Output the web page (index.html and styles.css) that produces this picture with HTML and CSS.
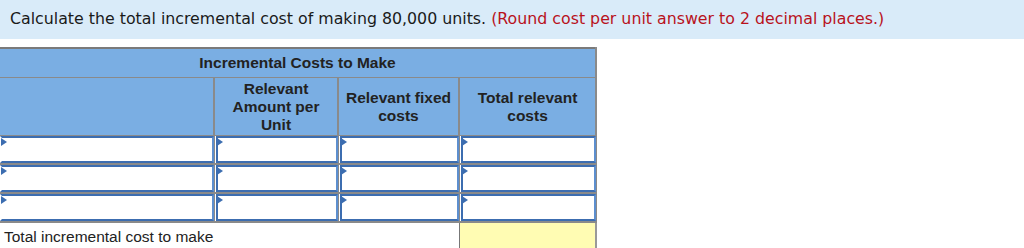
FILE: index.html
```html
<!DOCTYPE html>
<html>
<head>
<meta charset="utf-8">
<link rel="stylesheet" href="styles.css">
</head>
<body>
<div class="banner">Calculate the total incremental cost of making 80,000 units. <span class="note">(Round cost per unit answer to 2 decimal places.)</span></div>
<table class="grid">
  <colgroup>
    <col class="c1"><col class="c2"><col class="c3"><col class="c4">
  </colgroup>
  <tr class="h1"><th colspan="4">Incremental Costs to Make</th></tr>
  <tr class="h2"><th></th><th>Relevant<br>Amount per<br>Unit</th><th>Relevant fixed<br>costs</th><th>Total relevant<br>costs</th></tr>
  <tr class="row"><td><div class="inp"></div></td><td><div class="inp"></div></td><td><div class="inp"></div></td><td><div class="inp"></div></td></tr>
  <tr class="row"><td><div class="inp"></div></td><td><div class="inp"></div></td><td><div class="inp"></div></td><td><div class="inp"></div></td></tr>
  <tr class="row"><td><div class="inp"></div></td><td><div class="inp"></div></td><td><div class="inp"></div></td><td><div class="inp"></div></td></tr>
  <tr class="total"><td class="label" colspan="3">Total incremental cost to make</td><td class="yellow"></td></tr>
</table>
</body>
</html>
```

FILE: styles.css
```css
html, body {
  margin: 0;
  padding: 0;
  background: #ffffff;
}
.banner {
  height: 39px;
  line-height: 38px;
  padding-left: 10px;
  background: #d9ebf9;
  font-family: "DejaVu Sans", Verdana, sans-serif;
  font-size: 15.8px;
  color: #1a1a1a;
  white-space: nowrap;
}
.note {
  color: #b8121c;
}
.grid {
  margin-top: 8px;
  border-collapse: collapse;
  width: 596px;
  table-layout: fixed;
  font-family: "Liberation Sans", Arial, sans-serif;
}
.c1 { width: 214px; }
.c2 { width: 124px; }
.c3 { width: 121px; }
.c4 { width: 137px; }
.grid th {
  background: #7aaee3;
  border: 1px solid #8a8a8a;
  border-width: 1px 2px 1px 0;
  font-size: 15.5px;
  font-weight: bold;
  color: #222;
  line-height: 18px;
  padding: 0;
}
.grid th + th {
  border-left-width: 1px;
}
.h1 th {
  height: 28px;
  border-top: 2px solid #7a7a7a;
}
.h2 th {
  height: 57px;
}
.row td {
  height: 27px;
  padding: 0;
  border: 1px solid #8a8a8a;
  border-bottom-width: 2px;
  border-left-width: 0;
}
.row td + td {
  border-left-width: 1px;
}
.inp {
  position: relative;
  height: 23px;
  margin: 0 0 0 1px;
  background: #fff;
  border: 2px solid #3c6db0;
  border-right-color: #5d8fcf;
  box-sizing: content-box;
}
.row td:first-child .inp {
  margin-left: 0;
  border-left-color: #fff;
}
.inp::before {
  content: "";
  position: absolute;
  left: -1px;
  top: 0;
  width: 0;
  height: 0;
  border-top: 4px solid transparent;
  border-bottom: 4px solid transparent;
  border-left: 6px solid #3c6db0;
}
.total td {
  height: 27px;
  padding: 0;
}
.label {
  font-size: 15.5px;
  color: #222;
  padding-left: 4px !important;
  vertical-align: middle;
  line-height: 20px;
}
.yellow {
  background: #fffcb3;
  border-top: 2px solid #333;
  border-left: 1px solid #777;
  border-right: 2px solid #999;
}
```
